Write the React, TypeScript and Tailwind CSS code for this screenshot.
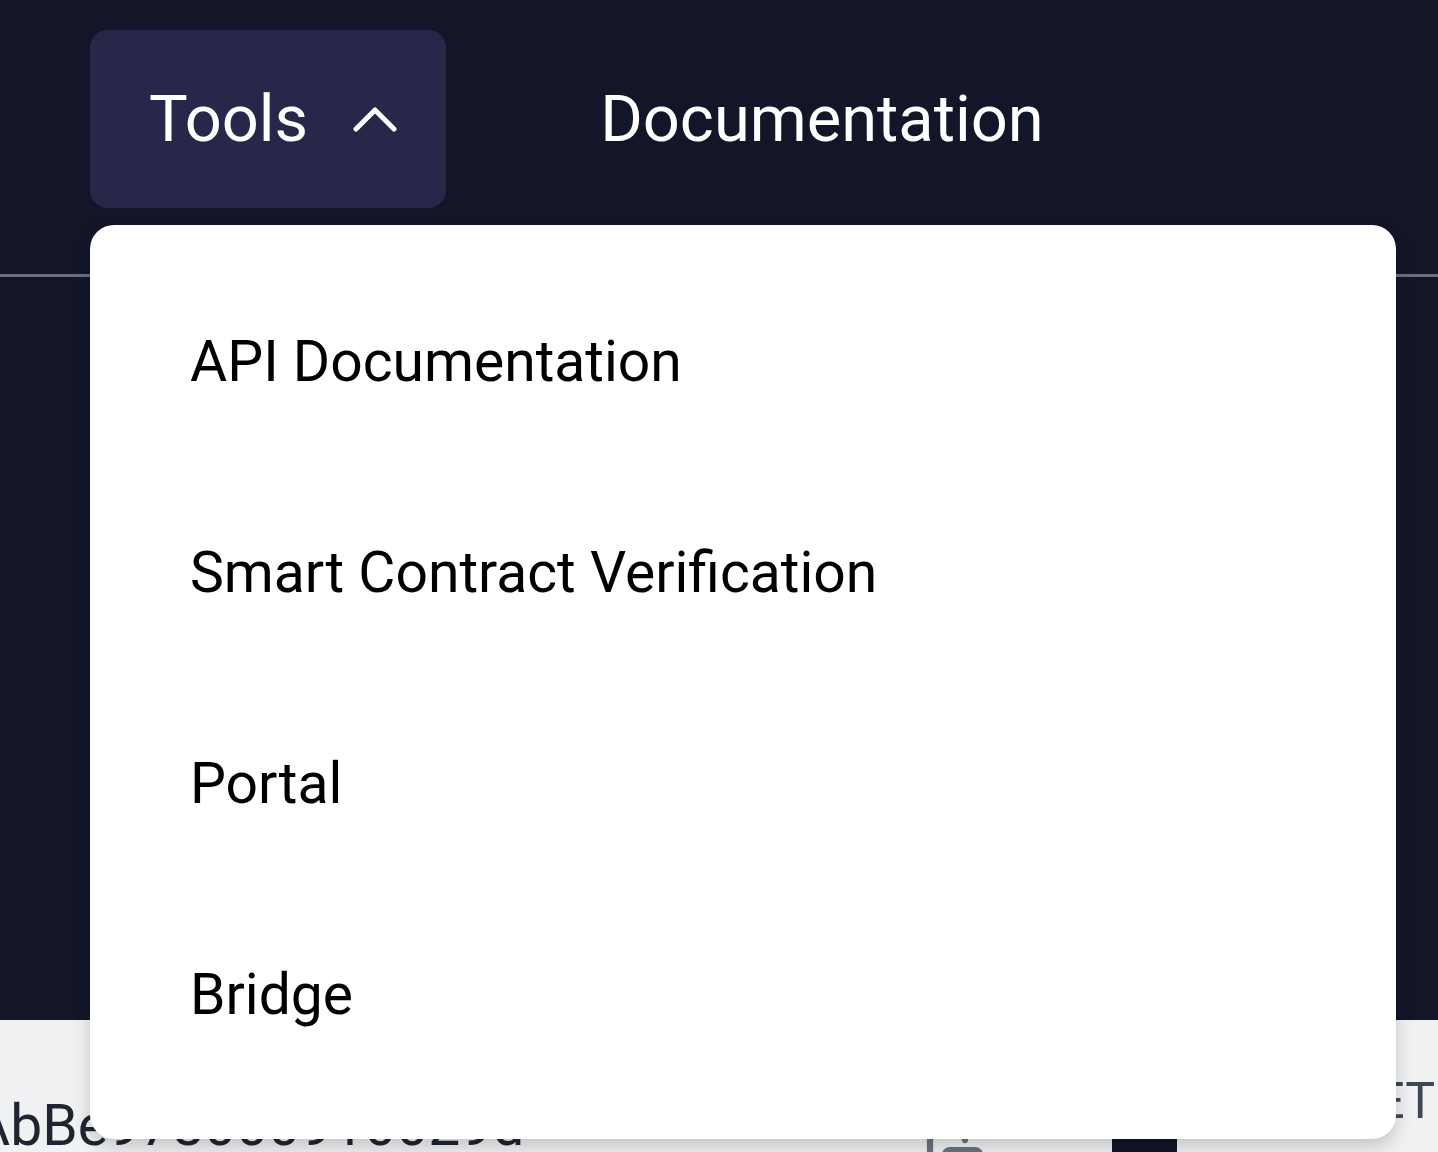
import { Copy } from 'lucide-react';

const menuItems = ['API Documentation', 'Smart Contract Verification', 'Portal', 'Bridge'];

export default function App() {
  return (
    <div className="relative h-[1152px] w-full overflow-hidden font-['Roboto','Liberation_Sans',sans-serif]">
      {/* header */}
      <div className="h-[1020px] bg-[#131529]">
        <nav className="flex items-start pl-[90px] pt-[30px]">
          <button className="flex h-[178px] items-center rounded-[18px] bg-[#272849] pl-[59px] pr-[49px] text-[65px] leading-none text-white">
            <span>Tools</span>
            <svg width="44" height="25" viewBox="0 0 44 25" className="ml-[45px]" fill="none">
              <polyline points="3,22 22,3 41,22" stroke="white" strokeWidth="5" strokeLinecap="round" strokeLinejoin="round" />
            </svg>
          </button>
          <a className="ml-[154px] flex h-[178px] items-center text-[65px] leading-none text-white">Documentation</a>
        </nav>
        <div className="mt-[66px] h-[3px] bg-[#6b6e7e]" />
      </div>

      {/* page content below header */}
      <div className="flex h-[132px] bg-[#f0f1f3]">
        <div className="-ml-[27px] w-[952px] shrink-0 overflow-hidden pt-[77px] text-[57px] leading-none whitespace-nowrap text-[#1f2430]">
          AbBe978000910029d
        </div>
        <div className="w-[60px] shrink-0 pt-[110px] text-[#6b7280]">
          <Copy size={60} strokeWidth={2.5} />
        </div>
        <div className="w-[127px] shrink-0" />
        <div className="mt-[80px] w-[65px] shrink-0 rounded-t-[8px] bg-[#131529]" />
        <div className="flex-1 overflow-hidden pt-[56px] pr-[3px] text-right text-[50px] leading-none whitespace-nowrap text-[#3f4655]">
          NET
        </div>
      </div>

      {/* dropdown menu */}
      <div className="absolute left-[90px] top-[225px] w-[1306px] rounded-[24px] bg-white pt-[31px] pb-[39px] shadow-[0_8px_18px_rgba(0,0,0,0.18)]">
        {menuItems.map((item) => (
          <div key={item} className="h-[211px] pl-[100px] text-[57px] leading-[211px] text-black">
            {item}
          </div>
        ))}
      </div>
    </div>
  );
}
